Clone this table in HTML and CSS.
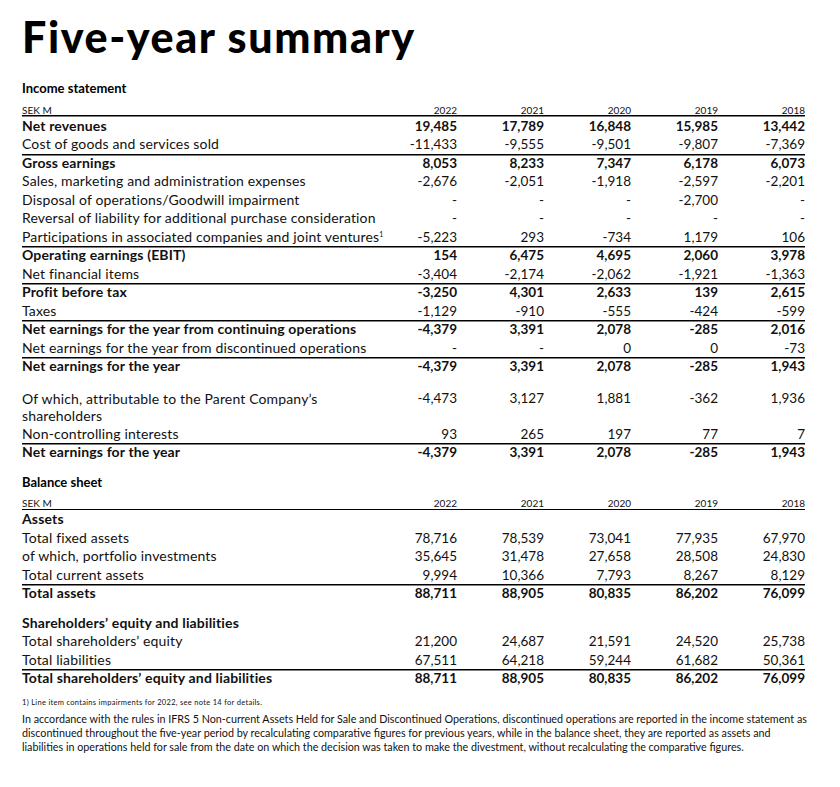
FILE: index.html
```html
<!DOCTYPE html>
<html lang="en">
<head>
<meta charset="utf-8">
<title>Five-year summary</title>
<link rel="stylesheet" href="styles.css">
</head>
<body>
<main class="page">
  <h1 class="title">Five-year summary</h1>

  <section class="block">
    <h2 class="section-title">Income statement</h2>
    <table class="fin">
      <colgroup><col class="c-label"><col class="c-num"><col class="c-num"><col class="c-num"><col class="c-num"><col class="c-num"></colgroup>
      <thead>
        <tr><th class="unit">SEK M</th><th>2022</th><th>2021</th><th>2020</th><th>2019</th><th>2018</th></tr>
      </thead>
      <tbody>
        <tr class="b"><td>Net revenues</td><td>19,485</td><td>17,789</td><td>16,848</td><td>15,985</td><td>13,442</td></tr>
        <tr><td>Cost of goods and services sold</td><td>-11,433</td><td>-9,555</td><td>-9,501</td><td>-9,807</td><td>-7,369</td></tr>
        <tr class="b rule"><td>Gross earnings</td><td>8,053</td><td>8,233</td><td>7,347</td><td>6,178</td><td>6,073</td></tr>
        <tr><td>Sales, marketing and administration expenses</td><td>-2,676</td><td>-2,051</td><td>-1,918</td><td>-2,597</td><td>-2,201</td></tr>
        <tr><td>Disposal of operations/Goodwill impairment</td><td>-</td><td>-</td><td>-</td><td>-2,700</td><td>-</td></tr>
        <tr><td>Reversal of liability for additional purchase consideration</td><td>-</td><td>-</td><td>-</td><td>-</td><td>-</td></tr>
        <tr><td>Participations in associated companies and joint ventures<sup>1</sup></td><td>-5,223</td><td>293</td><td>-734</td><td>1,179</td><td>106</td></tr>
        <tr class="b rule"><td>Operating earnings (EBIT)</td><td>154</td><td>6,475</td><td>4,695</td><td>2,060</td><td>3,978</td></tr>
        <tr><td>Net financial items</td><td>-3,404</td><td>-2,174</td><td>-2,062</td><td>-1,921</td><td>-1,363</td></tr>
        <tr class="b rule"><td>Profit before tax</td><td>-3,250</td><td>4,301</td><td>2,633</td><td>139</td><td>2,615</td></tr>
        <tr><td>Taxes</td><td>-1,129</td><td>-910</td><td>-555</td><td>-424</td><td>-599</td></tr>
        <tr class="b rule"><td>Net earnings for the year from continuing operations</td><td>-4,379</td><td>3,391</td><td>2,078</td><td>-285</td><td>2,016</td></tr>
        <tr><td>Net earnings for the year from discontinued operations</td><td>-</td><td>-</td><td>0</td><td>0</td><td>-73</td></tr>
        <tr class="b rule"><td>Net earnings for the year</td><td>-4,379</td><td>3,391</td><td>2,078</td><td>-285</td><td>1,943</td></tr>
        <tr class="gap"><td colspan="6"></td></tr>
        <tr class="top"><td>Of which, attributable to the Parent Company’s<br>shareholders</td><td>-4,473</td><td>3,127</td><td>1,881</td><td>-362</td><td>1,936</td></tr>
        <tr><td>Non-controlling interests</td><td>93</td><td>265</td><td>197</td><td>77</td><td>7</td></tr>
        <tr class="b rule"><td>Net earnings for the year</td><td>-4,379</td><td>3,391</td><td>2,078</td><td>-285</td><td>1,943</td></tr>
      </tbody>
    </table>
  </section>

  <section class="block block-bs">
    <h2 class="section-title">Balance sheet</h2>
    <table class="fin">
      <colgroup><col class="c-label"><col class="c-num"><col class="c-num"><col class="c-num"><col class="c-num"><col class="c-num"></colgroup>
      <thead>
        <tr><th class="unit">SEK M</th><th>2022</th><th>2021</th><th>2020</th><th>2019</th><th>2018</th></tr>
      </thead>
      <tbody>
        <tr class="b"><td>Assets</td><td></td><td></td><td></td><td></td><td></td></tr>
        <tr><td>Total fixed assets</td><td>78,716</td><td>78,539</td><td>73,041</td><td>77,935</td><td>67,970</td></tr>
        <tr><td>of which, portfolio investments</td><td>35,645</td><td>31,478</td><td>27,658</td><td>28,508</td><td>24,830</td></tr>
        <tr><td>Total current assets</td><td>9,994</td><td>10,366</td><td>7,793</td><td>8,267</td><td>8,129</td></tr>
        <tr class="b rule"><td>Total assets</td><td>88,711</td><td>88,905</td><td>80,835</td><td>86,202</td><td>76,099</td></tr>
        <tr class="gap gap-sm"><td colspan="6"></td></tr>
        <tr class="b"><td>Shareholders’ equity and liabilities</td><td></td><td></td><td></td><td></td><td></td></tr>
        <tr><td>Total shareholders’ equity</td><td>21,200</td><td>24,687</td><td>21,591</td><td>24,520</td><td>25,738</td></tr>
        <tr><td>Total liabilities</td><td>67,511</td><td>64,218</td><td>59,244</td><td>61,682</td><td>50,361</td></tr>
        <tr class="b rule"><td>Total shareholders’ equity and liabilities</td><td>88,711</td><td>88,905</td><td>80,835</td><td>86,202</td><td>76,099</td></tr>
      </tbody>
    </table>
  </section>

  <p class="footnote">1) Line item contains impairments for 2022, see note 14 for details.</p>
  <p class="note">In accordance with the rules in IFRS 5 Non-current Assets Held for Sale and Discontinued Operations, discontinued operations are reported in the income statement as discontinued throughout the five-year period by recalculating comparative figures for previous years, while in the balance sheet, they are reported as assets and liabilities in operations held for sale from the date on which the decision was taken to make the divestment, without recalculating the comparative figures.</p>
</main>
</body>
</html>
```

FILE: styles.css
```css
* { box-sizing: border-box; }

html, body {
  margin: 0;
  padding: 0;
  background: #fff;
}

body {
  font-family: Lato, "Noto Sans", sans-serif;
  color: #111;
}

.page {
  width: 840px;
  padding: 12px 30px 0 22px;
}

.title {
  margin: 0;
  font-size: 43px;
  font-weight: 900;
  line-height: 50px;
  letter-spacing: 1.6px;
  color: #000;
}

.block {
  margin-top: 18px;
}

.block-bs {
  margin-top: 12px;
}

.section-title {
  margin: 0;
  font-size: 13px;
  font-weight: 700;
  line-height: 16px;
  color: #000;
}

.fin {
  width: 783px;
  border-collapse: collapse;
  table-layout: fixed;
  font-size: 13.5px;
}

.c-label { width: 348px; }
.c-num { width: 87px; }

.fin th {
  font-size: 10px;
  font-weight: 400;
  text-align: right;
  padding: 8px 0 0;
  line-height: 11px;
  height: 20.5px;
  background: linear-gradient(#000, #000) left bottom / 100% 1.5px no-repeat;
}

.fin th.unit {
  text-align: left;
}

.fin td {
  padding: 0;
  height: 18.5px;
  line-height: 18.5px;
  text-align: right;
  white-space: nowrap;
  vertical-align: middle;
}

.fin td:first-child {
  text-align: left;
  font-size: 14px;
  letter-spacing: 0.15px;
}

.fin tr.b td {
  font-weight: 700;
}

.fin tr.rule td {
  background: linear-gradient(#000, #000) left top / 100% 1.5px no-repeat;
}

.fin tr.gap td {
  height: 13px;
}

.fin tr.gap-sm td {
  height: 11px;
}

.fin tr.top td {
  vertical-align: top;
  line-height: 17.5px;
  padding-top: 1px;
}

.fin sup {
  font-size: 7px;
  line-height: 0;
  vertical-align: 5px;
}

.footnote {
  margin: 10.5px 0 0;
  font-size: 7.5px;
  letter-spacing: 0.3px;
  line-height: 10px;
}

.note {
  margin: 4px 0 0;
  font-size: 10.75px;
  line-height: 14px;
}
```
